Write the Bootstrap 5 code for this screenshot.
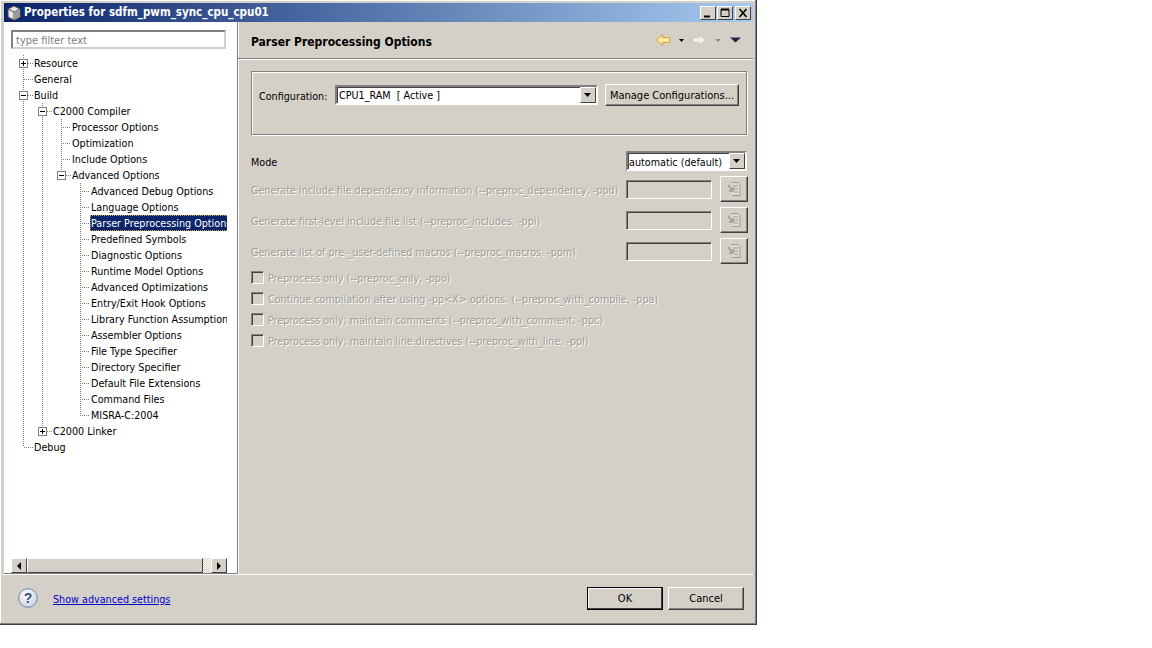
<!DOCTYPE html>
<html lang="en">
<head>
<meta charset="utf-8">
<title>Properties</title>
<link href="https://cdn.jsdelivr.net/npm/bootstrap@5.3.0/dist/css/bootstrap.min.css" rel="stylesheet">
<style>
html,body{background:#fff;margin:0;height:100%;}
body{font:10.7px/13px "DejaVu Sans Condensed","Noto Sans",sans-serif;color:#000;overflow:hidden;}
.wnd{width:757px;height:625px;background:#d4d0c8;border-right:1px solid #404040;border-bottom:1px solid #404040;box-shadow:inset -1px -1px 0 #808080,inset 1px 1px 0 #fff;padding:3px 3px 2px 3px;}
.ttl{height:19px;margin-left:1px;background:linear-gradient(90deg,#0a246a,#a6caf0);color:#fff;font-weight:700;font-size:11.5px;padding-left:2px;gap:2px;}
.ttl-btn{width:16px;height:14px;background:#d4d0c8;border:1px solid;border-color:#fff #404040 #404040 #fff;margin-left:1px;}
.ttl-x{margin-left:2px;}
.ttl-btns{margin-right:2px;}
.mainrow{height:552px;}
.lft{width:233px;flex:none;background:#fff;margin-left:1px;border-bottom:1px solid #808080;}
.filt.form-control{width:215px;height:19px;margin:8px 0 6px 7px;padding:1px 3px 0;border-radius:0;font-size:11px;line-height:15px;min-height:0;border:2px solid;border-color:#808080 #d4d0c8 #d4d0c8 #808080;color:#808080;}
.filt.form-control::placeholder{color:#808080;}
.treebox{width:216px;margin-left:7px;overflow:hidden;white-space:nowrap;}
.lines{position:absolute;left:-11px;top:-55px;}
.trow{height:16px;line-height:18px;position:relative;}
.d0{padding-left:23px}.d1{padding-left:42px}.d2{padding-left:61px}.d3{padding-left:80px}
.sel{background:#0a246a;color:#fff;outline:1px dotted #d4a040;outline-offset:-1px;padding-right:4px;margin-left:-1px;padding-left:1px;display:inline-block;height:16px;line-height:18px;vertical-align:top;}
.hbar{height:15px;width:216px;margin:0 0 0 7px;background:#e8e6e1;}
.sb{width:16px;height:15px;background:#d4d0c8;border:1px solid;border-color:#fff #404040 #404040 #fff;}
.thumb{width:176px;height:15px;background:#d4d0c8;border:1px solid;border-color:#fff #404040 #404040 #fff;}
.track{flex:1;height:15px;background:repeating-conic-gradient(#d4d0c8 0 25%,#fff 0 50%) 0 0/2px 2px;}
.rgt{flex:1;min-width:0;border-left:1px solid #808080;box-shadow:inset 1px 0 0 #fff;}
.hd{height:37px;flex:none;border-bottom:1px solid #808080;box-shadow:0 1px 0 #fff;padding:0 12px 0 13px;}
.hd h1{font:700 12px/14px "DejaVu Sans Condensed",sans-serif;margin:0;padding-top:4px;}
.grp{margin:12px 6px 0 13px;height:64px;flex:none;border:1px solid #808080;box-shadow:1px 1px 0 #fff,inset 1px 1px 0 #fff;padding:13px 7px 0 7px;}
.cmb{height:20px;background:#fff;border:2px solid;border-color:#808080 #fff #fff #808080;padding:0 0 0 1px;line-height:15px;box-shadow:inset 1px 1px 0 #404040;}
.cfgl{width:76px;padding-top:5px;}
.cfg{width:263px;padding-left:2px;}
.dd{width:16px;height:16px;background:#d4d0c8;border:1px solid;border-color:#fff #404040 #404040 #fff;margin-left:auto;}
.pbtn.btn{--bs-btn-padding-x:0;--bs-btn-padding-y:0;--bs-btn-font-size:11px;--bs-btn-line-height:13px;--bs-btn-border-radius:0;--bs-btn-bg:#d4d0c8;--bs-btn-color:#000;background:#d4d0c8;color:#000;border:1px solid;border-color:#fff #404040 #404040 #fff;box-shadow:inset -1px -1px 0 #808080;font-family:inherit;}
.mng{width:134px;height:22px;margin:-1px 0 0 7px;}
.opts{padding:0 6px 0 13px;}
.mode{height:20px;margin-top:16px;}
.mcmb{width:121px;}
.nudge{padding-top:2px;}
.orow{height:26px;margin-top:5px;margin-right:-1px;}
.dis{color:#a09c94;text-shadow:1px 1px 0 #fff;white-space:nowrap;padding-top:2px;}
.fld{width:86px;height:19px;border:1px solid;border-color:#808080 #fff #fff #808080;box-shadow:inset 1px 1px 0 #404040;margin-left:auto;background:#d4d0c8;}
.ib{width:28px;height:26px;margin-left:8px;}
.pbtn.ib:disabled{opacity:1;}
.chk{height:21px;gap:4px;}
.chks{margin-top:3px;}
.box{width:13px;height:13px;border:1px solid;border-color:#808080 #fff #fff #808080;box-shadow:inset 1px 1px 0 #404040;flex:none;}
.foot{height:48px;padding:0 9px 0 15px;box-shadow:inset 0 1px 0 #fff;}
.lnk{color:#0000c8;text-decoration:underline;margin-left:15px;padding-top:2px;}
.act{width:76px;height:23px;}
.okb.btn{border:1px solid #000;box-shadow:inset -1px -1px 0 #404040,inset 1px 1px 0 #fff;margin-right:5px;}
</style>
</head>
<body>
<div class="wnd d-flex flex-column">
  <div class="ttl d-flex align-items-center">
    <svg width="16" height="16" viewBox="0 0 16 16"><path d="M8 1l6 3v8l-6 3-6-3V4z" fill="#e4e4e4" stroke="#555"/><path d="M2 4l6 3 6-3M8 7v8" fill="none" stroke="#555"/><path d="M8 7l6-3v8l-6 3z" fill="#9a9a9a"/></svg>
    <span>Properties for sdfm_pwm_sync_cpu_cpu01</span>
    <div class="ttl-btns d-flex ms-auto">
      <div class="ttl-btn d-flex justify-content-center"><svg width="14" height="12" viewBox="0 0 14 12"><path d="M3 9.500h6" stroke="#000" stroke-width="2"/></svg></div>
      <div class="ttl-btn d-flex justify-content-center"><svg width="14" height="12" viewBox="0 0 14 12"><path d="M3 2.500h8v7H3z" fill="none" stroke="#000"/><path d="M3 2.500h8" stroke="#000" stroke-width="2"/></svg></div>
      <div class="ttl-btn ttl-x d-flex justify-content-center"><svg width="14" height="12" viewBox="0 0 14 12"><path d="M3.500 2l7 8M10.500 2l-7 8" stroke="#000" stroke-width="1.600"/></svg></div>
    </div>
  </div>
  <div class="mainrow d-flex">
    <div class="lft d-flex flex-column">
      <input class="filt form-control" placeholder="type filter text">
      <div class="treebox flex-grow-1 position-relative">
        <svg class="lines" width="240" height="500" viewBox="0 0 240 500">
          <g stroke="#808080" stroke-dasharray="1 1" fill="none">
            <path d="M23.500 55V447M28 63.500h5M24 79.500h9M28 95.500h5M24 447.500h9"/>
            <path d="M42.500 103V431M47 111.500h5M47 431.500h5"/>
            <path d="M61.500 119V175M61 127.500h10M61 143.500h10M61 159.500h10M66 175.500h5"/>
            <path d="M80.500 183V415M80 191.500h10M80 207.500h10M80 223.500h10M80 239.500h10M80 255.500h10M80 271.500h10M80 287.500h10M80 303.500h10M80 319.500h10M80 335.500h10M80 351.500h10M80 367.500h10M80 383.500h10M80 399.500h10M80 415.500h10"/>
          </g>
          <g fill="#fff" stroke="#808080">
            <rect x="19.500" y="59.500" width="8" height="8"/><rect x="19.500" y="91.500" width="8" height="8"/>
            <rect x="38.500" y="107.500" width="8" height="8"/><rect x="57.500" y="171.500" width="8" height="8"/><rect x="38.500" y="427.500" width="8" height="8"/>
          </g>
          <path d="M21 63.500h5M23.500 61v5M21 95.500h5M40 111.500h5M59 175.500h5M40 431.500h5M42.500 429v5" stroke="#000" fill="none"/>
        </svg>
        <div class="trow d0">Resource</div>
        <div class="trow d0">General</div>
        <div class="trow d0">Build</div>
        <div class="trow d1">C2000 Compiler</div>
        <div class="trow d2">Processor Options</div>
        <div class="trow d2">Optimization</div>
        <div class="trow d2">Include Options</div>
        <div class="trow d2">Advanced Options</div>
        <div class="trow d3">Advanced Debug Options</div>
        <div class="trow d3">Language Options</div>
        <div class="trow d3"><span class="sel">Parser Preprocessing Options</span></div>
        <div class="trow d3">Predefined Symbols</div>
        <div class="trow d3">Diagnostic Options</div>
        <div class="trow d3">Runtime Model Options</div>
        <div class="trow d3">Advanced Optimizations</div>
        <div class="trow d3">Entry/Exit Hook Options</div>
        <div class="trow d3">Library Function Assumptions</div>
        <div class="trow d3">Assembler Options</div>
        <div class="trow d3">File Type Specifier</div>
        <div class="trow d3">Directory Specifier</div>
        <div class="trow d3">Default File Extensions</div>
        <div class="trow d3">Command Files</div>
        <div class="trow d3">MISRA-C:2004</div>
        <div class="trow d1">C2000 Linker</div>
        <div class="trow d0">Debug</div>
      </div>
      <div class="hbar d-flex">
        <div class="sb d-flex align-items-center justify-content-center"><svg width="6" height="8" viewBox="0 0 6 8"><path d="M5 0v8L1 4z"/></svg></div>
        <div class="thumb"></div>
        <div class="track"></div>
        <div class="sb d-flex align-items-center justify-content-center"><svg width="6" height="8" viewBox="0 0 6 8"><path d="M1 0v8l4-4z"/></svg></div>
      </div>
    </div>
    <div class="rgt d-flex flex-column">
      <div class="hd d-flex align-items-center">
        <h1>Parser Preprocessing Options</h1>
        <svg class="ms-auto" width="86" height="14" viewBox="0 0 86 14">
          <path d="M1.500 7l6-5.500v3h7v5h-7v3z" fill="#fde9a8" stroke="#d9a030"/>
          <path d="M24 6h5l-2.500 3z" fill="#000"/>
          <path d="M50.500 7l-6-5.500v3h-7v5h7v3z" fill="#f0eeea" stroke="#c4c4c0"/>
          <path d="M60 6h6l-3 3z" fill="#8a8a8a"/>
          <path d="M75 4.500h11l-5.500 5z" fill="#2a1a50"/>
        </svg>
      </div>
      <div class="grp d-flex align-items-start">
        <span class="cfgl">Configuration:</span>
        <div class="cmb cfg d-flex align-items-center"><span>CPU1_RAM&nbsp; [ Active ]</span><div class="dd d-flex align-items-center justify-content-center"><svg width="8" height="5" viewBox="0 0 8 5"><path d="M0 0h7L3.500 4z"/></svg></div></div>
        <button class="btn pbtn mng" type="button">Manage Configurations...</button>
      </div>
      <div class="opts">
        <div class="mode d-flex align-items-center"><span class="nudge">Mode</span>
          <div class="cmb mcmb ms-auto d-flex align-items-center"><span class="nudge">automatic (default)</span><div class="dd d-flex align-items-center justify-content-center"><svg width="8" height="5" viewBox="0 0 8 5"><path d="M0 0h7L3.500 4z"/></svg></div></div>
        </div>
        <div class="orow d-flex align-items-center"><span class="dis">Generate include file dependency information (--preproc_dependency, -ppd)</span><div class="fld"></div><button class="btn pbtn ib d-flex align-items-center justify-content-center" type="button" disabled><svg width="16" height="16" viewBox="0 0 16 16"><path d="M5 1.500h7l2 2v11H6" fill="#dcd9d2" stroke="#a09c94"/><path d="M7 5h5M8 8h4M8 11h4" stroke="#a09c94"/><path d="M2 4l5 6M7 6v4H3" fill="none" stroke="#a09c94" stroke-width="1.500"/></svg></button></div>
        <div class="orow d-flex align-items-center"><span class="dis">Generate first-level include file list (--preproc_includes, -ppi)</span><div class="fld"></div><button class="btn pbtn ib d-flex align-items-center justify-content-center" type="button" disabled><svg width="16" height="16" viewBox="0 0 16 16"><path d="M5 1.500h7l2 2v11H6" fill="#dcd9d2" stroke="#a09c94"/><path d="M7 5h5M8 8h4M8 11h4" stroke="#a09c94"/><path d="M2 4l5 6M7 6v4H3" fill="none" stroke="#a09c94" stroke-width="1.500"/></svg></button></div>
        <div class="orow d-flex align-items-center"><span class="dis">Generate list of pre-_user-defined macros (--preproc_macros, -ppm)</span><div class="fld"></div><button class="btn pbtn ib d-flex align-items-center justify-content-center" type="button" disabled><svg width="16" height="16" viewBox="0 0 16 16"><path d="M5 1.500h7l2 2v11H6" fill="#dcd9d2" stroke="#a09c94"/><path d="M7 5h5M8 8h4M8 11h4" stroke="#a09c94"/><path d="M2 4l5 6M7 6v4H3" fill="none" stroke="#a09c94" stroke-width="1.500"/></svg></button></div>
        <div class="chks">
          <div class="chk d-flex align-items-center"><div class="box"></div><span class="dis">Preprocess only (--preproc_only, -ppo)</span></div>
          <div class="chk d-flex align-items-center"><div class="box"></div><span class="dis">Continue compilation after using -pp&lt;X&gt; options. (--preproc_with_compile, -ppa)</span></div>
          <div class="chk d-flex align-items-center"><div class="box"></div><span class="dis">Preprocess only; maintain comments (--preproc_with_comment, -ppc)</span></div>
          <div class="chk d-flex align-items-center"><div class="box"></div><span class="dis">Preprocess only; maintain line directives (--preproc_with_line, -ppl)</span></div>
        </div>
      </div>
    </div>
  </div>
  <div class="foot d-flex align-items-center">
    <svg width="20" height="20" viewBox="0 0 20 20"><defs><radialGradient id="hg" cx="40%" cy="35%" r="70%"><stop offset="0" stop-color="#fff"/><stop offset="1" stop-color="#c6d2e4"/></radialGradient></defs><circle cx="10" cy="10" r="9.300" fill="url(#hg)" stroke="#6f86a8"/><text x="10" y="15" font-family="Liberation Sans,sans-serif" font-size="14" font-weight="700" text-anchor="middle" fill="#3a4e78">?</text></svg>
    <a class="lnk" href="#">Show advanced settings</a>
    <button class="btn pbtn act okb ms-auto" type="button">OK</button>
    <button class="btn pbtn act" type="button">Cancel</button>
  </div>
</div>
</body>
</html>
